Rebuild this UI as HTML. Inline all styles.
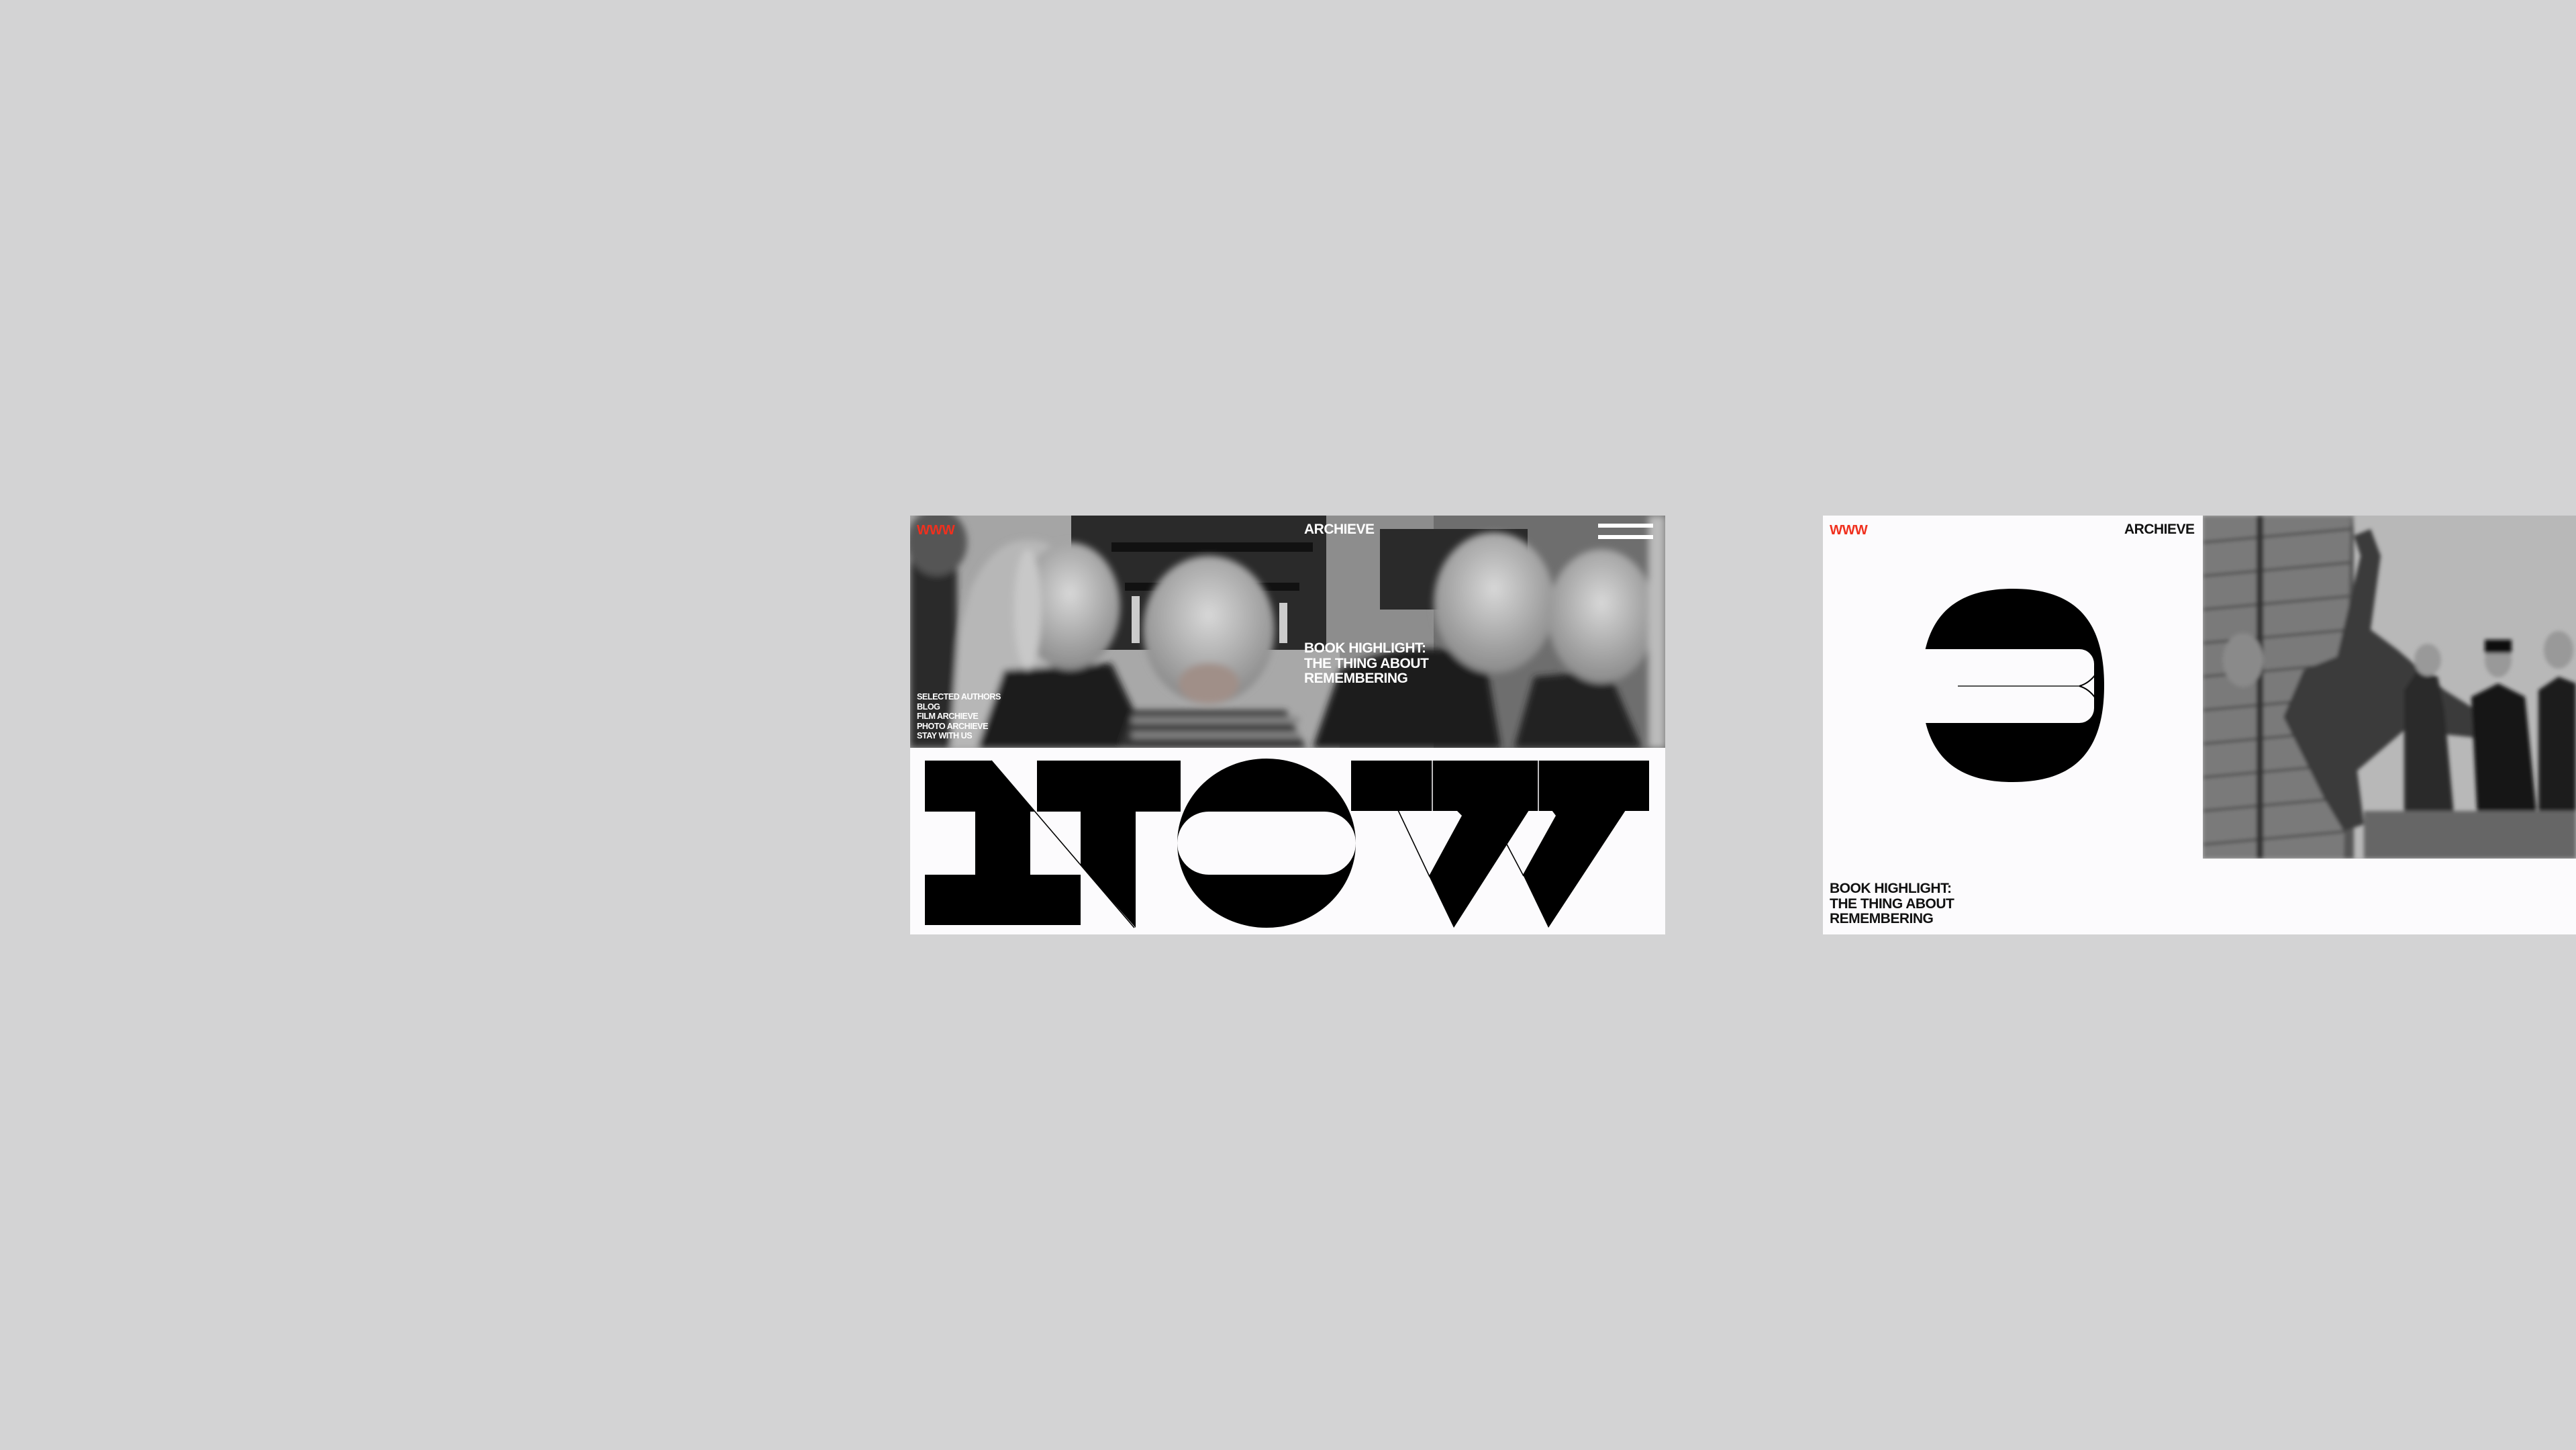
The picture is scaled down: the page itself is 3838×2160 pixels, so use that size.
<!DOCTYPE html>
<html><head><meta charset="utf-8"><style>
html,body{margin:0;padding:0}
body{width:3838px;height:2160px;background:#d3d3d4;position:relative;overflow:hidden;font-family:"Liberation Sans",sans-serif}
.t{position:absolute;white-space:nowrap;font-weight:bold;letter-spacing:-0.5px;transform-origin:0 0}
</style></head><body>

<!-- LEFT CARD -->
<div style="position:absolute;left:1356px;top:768px;width:1125px;height:624px;background:#fcfbfd;overflow:hidden">
  <div style="position:absolute;left:0;top:0;width:1125px;height:346px;overflow:hidden;background:#5a5a5a">
    <svg width="1125" height="346" style="position:absolute;left:0;top:0">
      <defs>
        <filter id="bl"><feGaussianBlur stdDeviation="5"/></filter>
        <radialGradient id="hair" cx="50%" cy="40%" r="60%"><stop offset="0" stop-color="#d8d8d8"/><stop offset="1" stop-color="#8a8a8a"/></radialGradient>
      </defs>
      <rect width="1125" height="346" fill="#6e6e6e"/>
      <rect x="0" y="0" width="240" height="346" fill="#a5a5a5"/>
      <rect x="240" y="0" width="380" height="200" fill="#2a2a2a"/>
      <rect x="300" y="40" width="300" height="14" fill="#111"/>
      <rect x="320" y="100" width="260" height="12" fill="#111"/>
      <rect x="330" y="120" width="12" height="70" fill="#ccc"/>
      <rect x="550" y="130" width="12" height="60" fill="#ccc"/>
      <rect x="620" y="0" width="160" height="346" fill="#8d8d8d"/>
      <rect x="700" y="20" width="220" height="120" fill="#2a2a2a"/>
      <rect x="240" y="200" width="400" height="146" fill="#a8a8a8"/>
      <g filter="url(#bl)">
        <rect x="0" y="40" width="70" height="306" fill="#2a2a2a"/>
        <ellipse cx="40" cy="40" rx="45" ry="50" fill="#555"/>
        <path d="M70 190 L90 110 Q130 20 200 40 Q260 70 270 180 L300 346 L60 346 Z" fill="#b7b7b7"/>
        <path d="M140 230 L300 220 L360 346 L100 346 Z" fill="#1e1e1e"/>
        <ellipse cx="238" cy="135" rx="75" ry="95" fill="url(#hair)"/>
        <ellipse cx="175" cy="140" rx="20" ry="90" fill="#c8c8c8"/>
        <path d="M310 346 L330 290 L560 290 L590 346 Z" fill="#333"/>
        <rect x="330" y="300" width="250" height="10" fill="#888"/>
        <rect x="330" y="322" width="250" height="10" fill="#888"/>
        <ellipse cx="445" cy="170" rx="98" ry="110" fill="url(#hair)"/>
        <ellipse cx="445" cy="250" rx="45" ry="30" fill="#a08f88"/>
        <path d="M600 346 L640 230 Q720 190 800 200 L860 230 L880 346 Z" fill="#1c1c1c"/>
        <ellipse cx="870" cy="130" rx="90" ry="105" fill="url(#hair)"/>
        <path d="M900 346 L930 240 L1040 230 L1090 346 Z" fill="#222"/>
        <ellipse cx="1030" cy="150" rx="80" ry="100" fill="url(#hair)"/>
        <rect x="1100" y="0" width="25" height="346" fill="#bbb"/>
      </g>
    </svg>
    <div class="t" style="left:10px;top:11px;font-size:20px;color:#f0301e;transform:scaleX(1.02)">WWW</div>
    <div class="t" style="left:587px;top:9px;font-size:21px;color:#fff;transform:scaleX(1.0)">ARCHIEVE</div>
    <div style="position:absolute;left:1025px;top:12px;width:82px;height:6px;background:#fff"></div>
    <div style="position:absolute;left:1025px;top:29px;width:82px;height:6px;background:#fff"></div>
    <div class="t" style="left:587px;top:187px;font-size:21px;line-height:22.5px;color:#fff;transform:scaleX(1.0)">BOOK HIGHLIGHT:<br>THE THING ABOUT<br>REMEMBERING</div>
    <div class="t" style="left:10px;top:263px;font-size:13px;line-height:14.6px;color:#fff;transform:scaleX(0.97)">SELECTED AUTHORS<br>BLOG<br>FILM ARCHIEVE<br>PHOTO ARCHIEVE<br>STAY WITH US</div>
  </div>
  <svg width="1125" height="624" style="position:absolute;left:0;top:0">
    <g transform="translate(-1356,-768)">
      <!-- N -->
      <path d="M1378 1133 H1477 L1542 1209 H1535 V1303 H1610 V1378 H1378 V1303 H1453 V1209 H1378 Z" fill="#000"/>
      <path d="M1545 1133 H1759 V1209 H1692 V1382 L1610 1289 V1209 H1545 Z" fill="#000"/>
      <line x1="1477" y1="1133" x2="1690" y2="1382" stroke="#000" stroke-width="1.6"/>
      <!-- O -->
      <ellipse cx="1887" cy="1256" rx="133" ry="126" fill="#000"/>
      <rect x="1754" y="1209" width="266" height="94" rx="47" ry="47" fill="#fcfbfd"/>
      <!-- W -->
      <rect x="2013" y="1133" width="444" height="75" fill="#000"/>
      <line x1="2134" y1="1133" x2="2134" y2="1208" stroke="#fcfbfd" stroke-width="1.5"/>
      <line x1="2292" y1="1133" x2="2292" y2="1208" stroke="#fcfbfd" stroke-width="1.5"/>
      <path d="M2170 1207 H2278 L2166 1382 L2129 1305 L2178 1215 Z" fill="#000"/>
      <path d="M2312 1207 H2422 L2307 1382 L2269 1303 L2318 1215 Z" fill="#000"/>
      <line x1="2083" y1="1207" x2="2130" y2="1306" stroke="#000" stroke-width="1.6"/>
      <line x1="2243" y1="1254" x2="2270" y2="1305" stroke="#000" stroke-width="1.6"/>
    </g>
  </svg>
</div>

<!-- RIGHT CARD -->
<div style="position:absolute;left:2716px;top:768px;width:1122px;height:624px;background:#fcfbfd;overflow:hidden">
  <div class="t" style="left:10px;top:11px;font-size:20px;color:#f0301e;transform:scaleX(1.02)">WWW</div>
  <div class="t" style="left:449px;top:9px;font-size:21px;color:#111;transform:scaleX(1.0)">ARCHIEVE</div>
  <svg width="600" height="624" style="position:absolute;left:0;top:0">
    <g transform="translate(-2716,-768)">
      <path d="M2863 1021 C2863 923 2907 877 2999 877 C3091 877 3135 923 3135 1021 C3135 1119 3091 1165 2999 1165 C2907 1165 2863 1119 2863 1021 Z" fill="#000"/>
      <rect x="2858" y="967" width="262" height="110" rx="22" ry="22" fill="#fcfbfd"/>
      <rect x="2855" y="967" width="30" height="110" fill="#fcfbfd"/>
      <line x1="2917" y1="1022" x2="3098" y2="1022" stroke="#555" stroke-width="2"/>
      <path d="M3098 1022 Q3112 1018 3122 1005 M3098 1022 Q3112 1026 3122 1040" stroke="#000" stroke-width="2" fill="none"/>
    </g>
  </svg>
  <div style="position:absolute;left:566px;top:0;width:556px;height:511px;overflow:hidden;background:#b9b9b9">
    <svg width="556" height="511" style="position:absolute;left:0;top:0">
      <defs><filter id="b2"><feGaussianBlur stdDeviation="3"/></filter></defs>
      <rect width="556" height="511" fill="#b8b8b8"/>
      <g filter="url(#b2)">
        <rect x="0" y="0" width="225" height="511" fill="#7a7a7a"/>
        <g stroke="#3a3a3a" stroke-width="3">
          <line x1="0" y1="40" x2="220" y2="20"/><line x1="0" y1="90" x2="220" y2="70"/>
          <line x1="0" y1="140" x2="220" y2="120"/><line x1="0" y1="190" x2="220" y2="170"/>
          <line x1="0" y1="240" x2="220" y2="220"/><line x1="0" y1="290" x2="220" y2="270"/>
          <line x1="0" y1="340" x2="220" y2="320"/><line x1="0" y1="390" x2="220" y2="370"/>
          <line x1="0" y1="440" x2="220" y2="420"/><line x1="0" y1="490" x2="220" y2="470"/>
        </g>
        <rect x="80" y="0" width="10" height="511" fill="#333"/>
        <path d="M220 0 L225 20 L225 511 L210 511 Z" fill="#555"/>
        <path d="M225 30 L235 60 L200 210 L150 230 L120 300 L180 420 L210 470 L240 460 L230 380 L300 320 L400 330 L430 350 L440 310 L360 260 L290 200 L250 170 L265 60 L250 20 Z" fill="#3a3a3a"/>
        <ellipse cx="60" cy="215" rx="30" ry="40" fill="#8a8a8a"/>
        <path d="M300 260 L320 230 L350 240 L360 290 L380 511 L300 511 Z" fill="#2b2b2b"/>
        <ellipse cx="335" cy="215" rx="20" ry="24" fill="#999"/>
        <path d="M400 270 L440 250 L480 270 L500 470 L410 470 Z" fill="#161616"/>
        <ellipse cx="440" cy="215" rx="20" ry="26" fill="#999"/>
        <rect x="420" y="185" width="40" height="20" fill="#111"/>
        <path d="M500 260 L530 240 L556 250 L556 511 L500 511 Z" fill="#1a1a1a"/>
        <ellipse cx="530" cy="200" rx="22" ry="28" fill="#999"/>
        <rect x="240" y="440" width="316" height="71" fill="#666"/>
      </g>
    </svg>
  </div>
  <div class="t" style="left:10px;top:545px;font-size:21px;line-height:22.5px;color:#111;transform:scaleX(1.0)">BOOK HIGHLIGHT:<br>THE THING ABOUT<br>REMEMBERING</div>
</div>

</body></html>
